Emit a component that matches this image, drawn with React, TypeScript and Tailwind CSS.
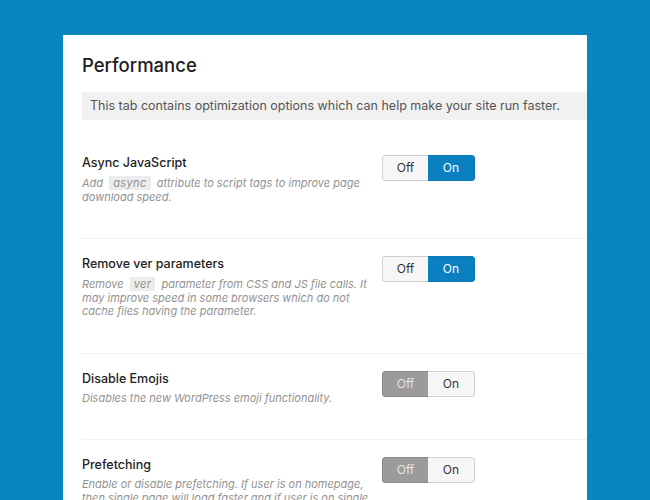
import React from "react";

type Option = {
  title: string;
  desc: React.ReactNode;
  on: boolean;
};

const Code = ({ children }: { children: React.ReactNode }) => (
  <span className="mx-[3px] inline-block bg-[#ececec] px-[4px] leading-[14px] tracking-[0.4px]">{children}</span>
);

const options: Option[] = [
  {
    title: "Async JavaScript",
    desc: (
      <>
        Add <Code>async</Code> attribute to script tags to improve page download speed.
      </>
    ),
    on: true,
  },
  {
    title: "Remove ver parameters",
    desc: (
      <>
        Remove <Code>ver</Code> parameter from CSS and JS file calls. It may improve speed in some
        browsers which do not cache files having the parameter.
      </>
    ),
    on: true,
  },
  {
    title: "Disable Emojis",
    desc: "Disables the new WordPress emoji functionality.",
    on: false,
  },
  {
    title: "Prefetching",
    desc: "Enable or disable prefetching. If user is on homepage, then single page will load faster and if user is on single page, home page will load faster.",
    on: false,
  },
];

const Toggle = ({ on }: { on: boolean }) => (
  <div className="flex h-[26px] w-[93px] shrink-0 overflow-hidden rounded-[3px] text-[12px]">
    <div
      className={
        on
          ? "flex w-[46px] items-center justify-center rounded-l-[3px] border border-r-0 border-[#cfcfcf] bg-[#f6f6f6] text-[#333]"
          : "flex w-[46px] items-center justify-center rounded-l-[3px] border border-r-0 border-[#888] bg-[#9b9b9b] text-[#e4e4e4]"
      }
    >
      Off
    </div>
    <div
      className={
        on
          ? "flex flex-1 items-center justify-center rounded-r-[3px] border border-l-0 border-[#0a78b4] bg-[#0b80c1] text-white"
          : "flex flex-1 items-center justify-center rounded-r-[3px] border border-l-0 border-[#d3d3d3] bg-[#f6f6f6] text-[#333]"
      }
    >
      On
    </div>
  </div>
);

export default function App() {
  return (
    <div
      className="h-[500px] overflow-hidden bg-[#0886be] pl-[63px] pt-[35px]"
      style={{ fontFamily: "Inter, 'Noto Sans', sans-serif" }}
    >
      <div className="h-[480px] w-[524px] bg-white pl-[19px]">
        <h1 className="pt-[16px] text-[18.5px] font-medium leading-[28px] text-[#1d1d1d]">Performance</h1>
        <div className="mb-[18px] mt-[13px] flex h-[28px] items-center bg-[#f1f1f1] pl-[8px] text-[12.5px] text-[#555]">
          This tab contains optimization options which can help make your site run faster.
        </div>
        {options.map((o, i) => (
          <div key={i} className="flex border-b border-[#f0f0f0] pb-[34px] pt-[17px]">
            <div className="w-[300px]">
              <div className="text-[12.5px] font-medium leading-[16px] text-[#222]">{o.title}</div>
              <div className="mt-[5px] w-[288px] text-[11px] italic leading-[13.5px] text-[#929292]">
                {o.desc}
              </div>
            </div>
            <Toggle on={o.on} />
          </div>
        ))}
      </div>
    </div>
  );
}
